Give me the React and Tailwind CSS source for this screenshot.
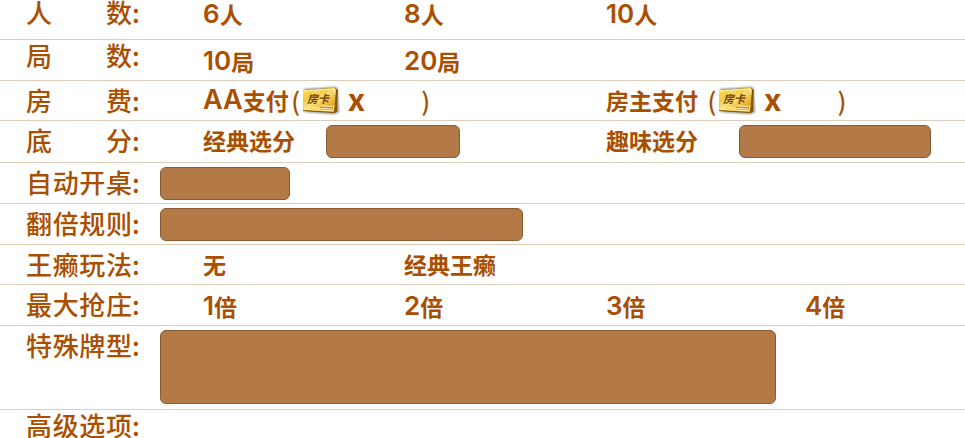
function Row({ label, height, labelClass = 'leading-[38px]', last = false, children }) {
  return (
    <div className={`flex items-start ${height} ${last ? '' : 'border-b border-[#dccdb8]'}`}>
      <dt className={`flex w-40 shrink-0 pl-[26px] text-[26px] ${labelClass}`}>
        <span className="flex w-[106px] justify-between">
          {label.map((part) => (
            <span key={part}>{part}</span>
          ))}
        </span>
        <span>:</span>
      </dt>
      <dd className="min-w-0 flex-1">{children}</dd>
    </div>
  );
}

function Options({ lineClass = 'leading-[38px]', children }) {
  return (
    <div
      className={`grid grid-cols-[201fr_202fr_199fr_160fr] pl-[43px] text-[23px] font-bold whitespace-nowrap ${lineClass}`}
    >
      {children}
    </div>
  );
}

function Option({ count, unit }) {
  return (
    <span className="flex">
      <span className="font-[Inter,sans-serif] text-[26px] font-semibold">{count}</span>
      <span>{unit}</span>
    </span>
  );
}

function Field({ name, size }) {
  return (
    <button
      type="button"
      aria-label={name}
      className={`block shrink-0 rounded-md border border-[#8a5a31] bg-[#b37a48] ${size}`}
    />
  );
}

function RoomCard({ id }) {
  return (
    <svg className="h-[30px] w-[38px]" viewBox="0 0 38 30" role="img" aria-label="房卡">
      <defs>
        <linearGradient id={`${id}-gold`} x1="0" y1="0" x2="1" y2="1">
          <stop offset="0" stopColor="#ffe36a" />
          <stop offset="0.3" stopColor="#f3c43a" />
          <stop offset="0.5" stopColor="#fbdc72" />
          <stop offset="0.75" stopColor="#e9b02a" />
          <stop offset="1" stopColor="#d39512" />
        </linearGradient>
        <filter id={`${id}-shade`} x="-20%" y="-20%" width="140%" height="140%">
          <feGaussianBlur stdDeviation="1" />
        </filter>
      </defs>
      <path d="M2 4 L35 2 L37 27 L32 29 L3 27Z" fill="#5b5145" opacity="0.7" filter={`url(#${id}-shade)`} />
      <path d="M2 5 L33 3 L36 5 L35 27 L32 28 L1 26Z" fill="#86560c" />
      <path d="M1 5 L33 3 L34 5 L32 27 L1 25Z" fill={`url(#${id}-gold)`} />
      <path d="M2 6 L32 4 L33 9 M2 24 L31 26 L32 20" fill="none" stroke="#fff3a6" strokeWidth="1" />
      <path d="M2 18 L13 5 L20 4 L7 24 L2 24Z" fill="#fff09a" opacity="0.35" />
      <path d="M10 22.5 L30 24 M19 21 L30 21.5" fill="none" stroke="#fff6c4" strokeWidth="1" />
      <path d="M18 22.2 L30 22.8" fill="none" stroke="#b77b12" strokeWidth="0.8" />
      <text
        x="5"
        y="18"
        fontSize="11"
        fontStyle="italic"
        fontWeight="700"
        fill="#754008"
        fontFamily="'Noto Sans CJK SC', sans-serif"
      >
        房卡
      </text>
    </svg>
  );
}

function Cost({ id, gap }) {
  return (
    <span className={`flex items-center ${gap}`}>
      <span className="w-3 text-center text-[25px] leading-[36px] font-medium">(</span>
      <RoomCard id={id} />
      <span className="ml-2 w-4 font-[Inter,sans-serif] text-[30px] leading-[38px]">x</span>
      <span className="ml-14 w-3 text-center text-[25px] leading-[36px] font-medium">)</span>
    </span>
  );
}

export default function App() {
  return (
    <main className="w-full overflow-hidden bg-white font-['Noto_Sans_CJK_SC',sans-serif] font-medium text-[#aa4e00]">
      <dl>
        <Row label={['人', '数']} height="h-10" labelClass="leading-[24px]">
          <Options lineClass="leading-[28px]">
            <Option count="6" unit="人" />
            <Option count="8" unit="人" />
            <Option count="10" unit="人" />
          </Options>
        </Row>
        <Row label={['局', '数']} height="h-[41px]" labelClass="leading-[30px]">
          <Options lineClass="leading-[42px]">
            <Option count="10" unit="局" />
            <Option count="20" unit="局" />
          </Options>
        </Row>
        <Row label={['房', '费']} height="h-10">
          <Options>
            <span className="col-span-2 flex">
              <span className="font-[Inter,sans-serif] text-[27px] font-semibold">AA</span>
              <span>支付</span>
              <Cost id="shared" gap="ml-px" />
            </span>
            <span className="col-span-2 flex">
              <span>房主支付</span>
              <Cost id="owner" gap="ml-2" />
            </span>
          </Options>
        </Row>
        <Row label={['底', '分']} height="h-[42px]">
          <Options>
            <span className="col-span-2 flex">
              <span className="w-[123px]">经典选分</span>
              <span className="pt-1">
                <Field name="经典选分" size="h-[33px] w-[134px]" />
              </span>
            </span>
            <span className="col-span-2 flex">
              <span className="w-[133px]">趣味选分</span>
              <span className="pt-1">
                <Field name="趣味选分" size="h-[33px] w-48" />
              </span>
            </span>
          </Options>
        </Row>
        <Row label={['自', '动', '开', '桌']} height="h-[41px]">
          <div className="pt-1">
            <Field name="自动开桌" size="h-[33px] w-[130px]" />
          </div>
        </Row>
        <Row label={['翻', '倍', '规', '则']} height="h-[41px]">
          <div className="pt-1">
            <Field name="翻倍规则" size="h-[33px] w-[363px]" />
          </div>
        </Row>
        <Row label={['王', '癞', '玩', '法']} height="h-10">
          <Options>
            <span>无</span>
            <span>经典王癞</span>
          </Options>
        </Row>
        <Row label={['最', '大', '抢', '庄']} height="h-[41px]">
          <Options lineClass="leading-[42px]">
            <Option count="1" unit="倍" />
            <Option count="2" unit="倍" />
            <Option count="3" unit="倍" />
            <Option count="4" unit="倍" />
          </Options>
        </Row>
        <Row label={['特', '殊', '牌', '型']} height="h-[84px]">
          <div className="pt-1">
            <Field name="特殊牌型" size="h-[74px] w-[616px]" />
          </div>
        </Row>
        <Row label={['高', '级', '选', '项']} height="h-7" labelClass="leading-[30px]" last />
      </dl>
    </main>
  );
}
